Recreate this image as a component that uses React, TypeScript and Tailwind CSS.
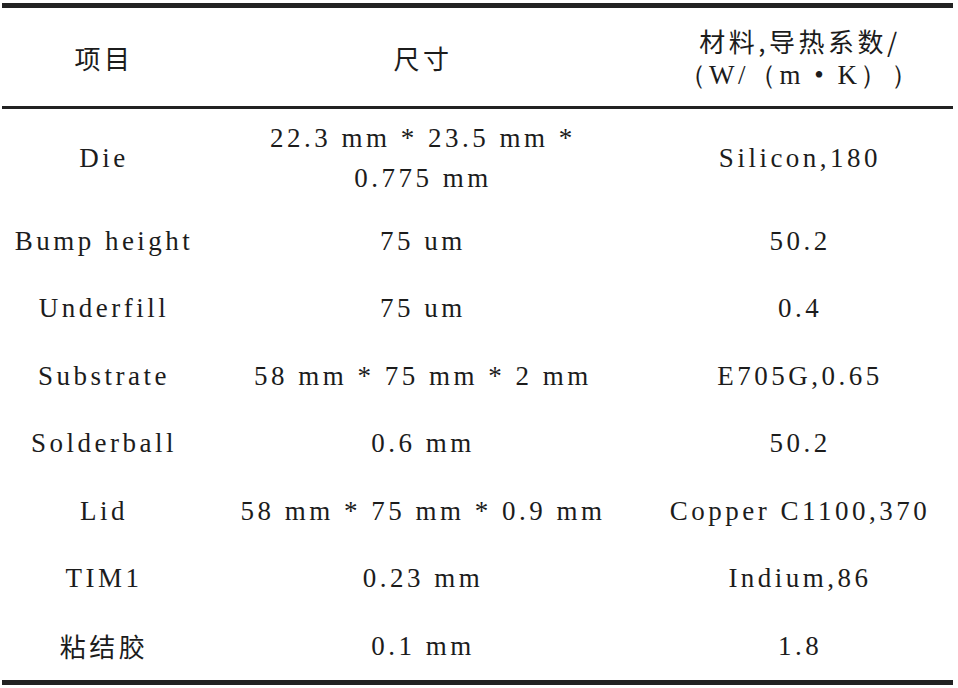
const rows: { item: string; size: string[]; material: string }[] = [
  { item: "Die", size: ["22.3 mm * 23.5 mm *", "0.775 mm"], material: "Silicon,180" },
  { item: "Bump height", size: ["75 um"], material: "50.2" },
  { item: "Underfill", size: ["75 um"], material: "0.4" },
  { item: "Substrate", size: ["58 mm * 75 mm * 2 mm"], material: "E705G,0.65" },
  { item: "Solderball", size: ["0.6 mm"], material: "50.2" },
  { item: "Lid", size: ["58 mm * 75 mm * 0.9 mm"], material: "Copper C1100,370" },
  { item: "TIM1", size: ["0.23 mm"], material: "Indium,86" },
  { item: "粘结胶", size: ["0.1 mm"], material: "1.8" },
];

const cjk = "[font-family:Noto_Sans_CJK_SC] text-[26px]";

export default function App() {
  return (
    <div className="w-[958px] h-[688px] bg-white pt-[3px] text-[#1c1c1c] text-[27px] tracking-[3.5px] [font-family:Liberation_Serif]">
      <div className="ml-[2px] w-[951px]">
        {/* Top rule */}
        <div className="h-[5px] bg-[#222]" />

        {/* Header */}
        <div className="grid grid-cols-[204px_434px_313px] h-[98px] items-center text-center">
          <div className={cjk}>项目</div>
          <div className={cjk}>尺寸</div>
          <div className="pl-[7px] leading-[35px] pt-[1px]">
            <div className={cjk}>材料,导热系数/</div>
            <div>（W/（m • K））</div>
          </div>
        </div>
        <div className="h-[3px] bg-[#222]" />

        {/* Body */}
        {rows.map((row, i) => (
          <div
            key={row.item}
            className={`grid grid-cols-[204px_434px_313px] items-center text-center ${
              i === 0 ? "h-[98px]" : "h-[67.5px]"
            }`}
          >
            <div className={row.item === "粘结胶" ? cjk : ""}>{row.item}</div>
            <div className="leading-[40px]">
              {row.size.map((line) => (
                <div key={line}>{line}</div>
              ))}
            </div>
            <div className="pl-[7px]">{row.material}</div>
          </div>
        ))}

        {/* Bottom rule */}
        <div className="h-[5px] bg-[#222]" />
      </div>
    </div>
  );
}
